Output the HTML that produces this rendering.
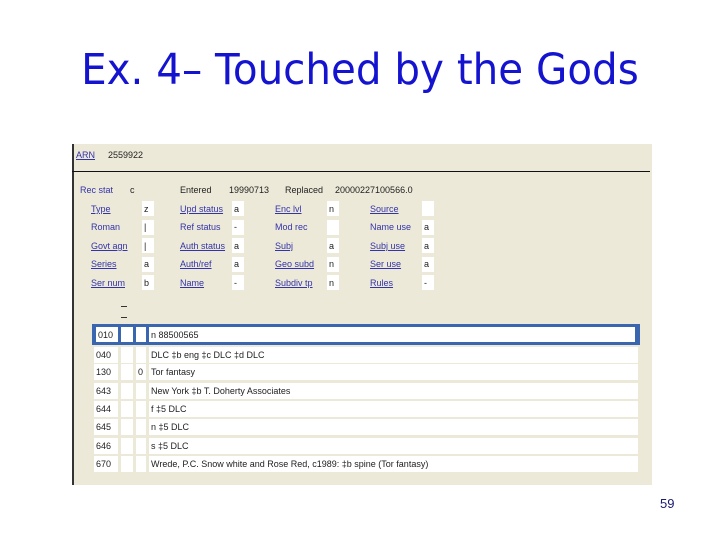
<!DOCTYPE html>
<html><head><meta charset="utf-8"><style>
body{margin:0;width:720px;height:540px;background:#fff;position:relative;overflow:hidden;font-family:"Liberation Sans",sans-serif}
.t{position:absolute;left:0;width:720px;top:45px;text-align:center;font-size:43px;color:#1414d0;font-family:"Comic Sans MS","DejaVu Sans",sans-serif;transform:scaleX(0.94);transform-origin:359px 0}
.p{position:absolute;left:72px;top:144px;width:578px;height:341px;background:#ece9d8;border-left:2px solid #333}
.ln{position:absolute;left:72px;top:171px;width:578px;height:1px;background:#111}
.a{position:absolute;font-size:9px;color:#222;white-space:nowrap;line-height:12px}
.l{color:#3333aa}
.u{text-decoration:underline}
.b{position:absolute;background:#fff;width:12px;height:15px}
.r{position:absolute;left:94px;width:544px;height:16px}
.r div{position:absolute;top:0;height:16px;background:#fff;font-size:9px;line-height:16px;color:#222;padding-left:2px;box-sizing:border-box}
.pg{position:absolute;left:660px;top:496px;font-size:13px;color:#1a1a70}
</style></head><body>
<div class="t">Ex. 4– Touched by the Gods</div>
<div class="p"></div>
<div class="ln"></div>
<div class="a l u" style="left:76px;top:149px">ARN</div>
<div class="a" style="left:108px;top:149px">2559922</div>

<div class="a l" style="left:80px;top:184px">Rec stat</div><div class="a" style="left:130px;top:184px">c</div>
<div class="a" style="left:180px;top:184px">Entered</div><div class="a" style="left:229px;top:184px">19990713</div>
<div class="a" style="left:285px;top:184px">Replaced</div><div class="a" style="left:335px;top:184px">20000227100566.0</div>

<div class="b" style="left:142px;top:201px"></div><div class="b" style="left:232px;top:201px"></div><div class="b" style="left:327px;top:201px"></div><div class="b" style="left:422px;top:201px"></div>
<div class="b" style="left:142px;top:220px"></div><div class="b" style="left:232px;top:220px"></div><div class="b" style="left:327px;top:220px"></div><div class="b" style="left:422px;top:220px"></div>
<div class="b" style="left:142px;top:238px"></div><div class="b" style="left:232px;top:238px"></div><div class="b" style="left:327px;top:238px"></div><div class="b" style="left:422px;top:238px"></div>
<div class="b" style="left:142px;top:257px"></div><div class="b" style="left:232px;top:257px"></div><div class="b" style="left:327px;top:257px"></div><div class="b" style="left:422px;top:257px"></div>
<div class="b" style="left:142px;top:275px"></div><div class="b" style="left:232px;top:275px"></div><div class="b" style="left:327px;top:275px"></div><div class="b" style="left:422px;top:275px"></div>

<div class="a l u" style="left:91px;top:203px">Type</div><div class="a" style="left:144px;top:203px">z</div>
<div class="a l u" style="left:180px;top:203px">Upd status</div><div class="a" style="left:234px;top:203px">a</div>
<div class="a l u" style="left:275px;top:203px">Enc lvl</div><div class="a" style="left:329px;top:203px">n</div>
<div class="a l u" style="left:370px;top:203px">Source</div>

<div class="a l" style="left:91px;top:221px">Roman</div><div class="a" style="left:144px;top:221px">|</div>
<div class="a l" style="left:180px;top:221px">Ref status</div><div class="a" style="left:234px;top:221px">-</div>
<div class="a l" style="left:275px;top:221px">Mod rec</div>
<div class="a l" style="left:370px;top:221px">Name use</div><div class="a" style="left:424px;top:221px">a</div>

<div class="a l u" style="left:91px;top:240px">Govt agn</div><div class="a" style="left:144px;top:240px">|</div>
<div class="a l u" style="left:180px;top:240px">Auth status</div><div class="a" style="left:234px;top:240px">a</div>
<div class="a l u" style="left:275px;top:240px">Subj</div><div class="a" style="left:329px;top:240px">a</div>
<div class="a l u" style="left:370px;top:240px">Subj use</div><div class="a" style="left:424px;top:240px">a</div>

<div class="a l u" style="left:91px;top:258px">Series</div><div class="a" style="left:144px;top:258px">a</div>
<div class="a l u" style="left:180px;top:258px">Auth/ref</div><div class="a" style="left:234px;top:258px">a</div>
<div class="a l u" style="left:275px;top:258px">Geo subd</div><div class="a" style="left:329px;top:258px">n</div>
<div class="a l u" style="left:370px;top:258px">Ser use</div><div class="a" style="left:424px;top:258px">a</div>

<div class="a l u" style="left:91px;top:277px">Ser num</div><div class="a" style="left:144px;top:277px">b</div>
<div class="a l u" style="left:180px;top:277px">Name</div><div class="a" style="left:234px;top:277px">-</div>
<div class="a l u" style="left:275px;top:277px">Subdiv tp</div><div class="a" style="left:329px;top:277px">n</div>
<div class="a l u" style="left:370px;top:277px">Rules</div><div class="a" style="left:424px;top:277px">-</div>

<div style="position:absolute;left:121px;top:306px;width:6px;height:1px;background:#333"></div>
<div style="position:absolute;left:121px;top:317px;width:6px;height:1px;background:#333"></div>

<div style="position:absolute;left:92px;top:324px;width:548px;height:21px;background:#3a66b0"></div>
<div class="r" style="top:327px;height:15px"><div style="left:2px;width:22px;height:15px">010</div><div style="left:27px;width:12px;height:15px"></div><div style="left:42px;width:10px;height:15px"></div><div style="left:55px;width:486px;height:15px">n 88500565</div></div>
<div class="r" style="top:347px"><div style="left:0;width:24px">040</div><div style="left:27px;width:12px"></div><div style="left:42px;width:10px"></div><div style="left:55px;width:489px">DLC ‡b eng ‡c DLC ‡d DLC</div></div>
<div class="r" style="top:364px"><div style="left:0;width:24px">130</div><div style="left:27px;width:12px"></div><div style="left:42px;width:10px">0</div><div style="left:55px;width:489px">Tor fantasy</div></div>
<div class="r" style="top:383px"><div style="left:0;width:24px">643</div><div style="left:27px;width:12px"></div><div style="left:42px;width:10px"></div><div style="left:55px;width:489px">New York ‡b T. Doherty Associates</div></div>
<div class="r" style="top:401px"><div style="left:0;width:24px">644</div><div style="left:27px;width:12px"></div><div style="left:42px;width:10px"></div><div style="left:55px;width:489px">f ‡5 DLC</div></div>
<div class="r" style="top:419px"><div style="left:0;width:24px">645</div><div style="left:27px;width:12px"></div><div style="left:42px;width:10px"></div><div style="left:55px;width:489px">n ‡5 DLC</div></div>
<div class="r" style="top:438px"><div style="left:0;width:24px">646</div><div style="left:27px;width:12px"></div><div style="left:42px;width:10px"></div><div style="left:55px;width:489px">s ‡5 DLC</div></div>
<div class="r" style="top:456px"><div style="left:0;width:24px">670</div><div style="left:27px;width:12px"></div><div style="left:42px;width:10px"></div><div style="left:55px;width:489px">Wrede, P.C. Snow white and Rose Red, c1989: ‡b spine (Tor fantasy)</div></div>

<div class="pg">59</div>
</body></html>
